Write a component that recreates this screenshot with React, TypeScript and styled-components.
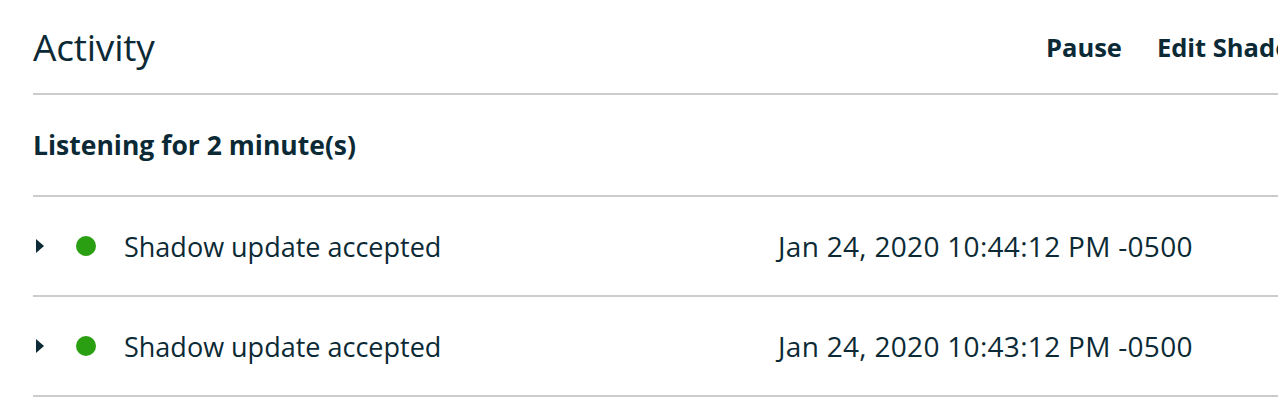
import styled, { createGlobalStyle } from "styled-components";

const GlobalStyle = createGlobalStyle`
  html, body {
    margin: 0;
    padding: 0;
    background: #ffffff;
    overflow: hidden;
  }
  body {
    font-family: "Open Sans", "Liberation Sans", sans-serif;
    color: #0b2a35;
  }
`;

const Panel = styled.section`
  margin-left: 33px;
  width: 1318px;
`;

const Header = styled.div`
  display: flex;
  align-items: center;
  justify-content: space-between;
  height: 93px;
  border-bottom: 2px solid #cccccc;
`;

const Title = styled.h2`
  margin: 0 0 1px;
  font-size: 37px;
  font-weight: 400;
  letter-spacing: -0.2px;
`;

const Actions = styled.div`
  display: flex;
  gap: 35px;
  width: 305px;
`;

const ActionButton = styled.button`
  border: none;
  background: none;
  padding: 0;
  font-family: inherit;
  font-size: 25.5px;
  font-weight: 700;
  color: #0b2a35;
  white-space: nowrap;
  cursor: pointer;
`;

const Status = styled.div`
  display: flex;
  align-items: center;
  height: 100px;
  border-bottom: 2px solid #cccccc;
  font-size: 26.5px;
  font-weight: 700;
`;

const Row = styled.div`
  display: grid;
  grid-template-columns: 40px 48px 654px auto;
  align-items: center;
  height: 98px;
  padding-left: 3px;
  border-bottom: 2px solid #cccccc;
  font-size: 27px;
`;

const Caret = styled.span`
  width: 0;
  height: 0;
  border-top: 7px solid transparent;
  border-bottom: 7px solid transparent;
  border-left: 8px solid #0b2a35;
`;

const Dot = styled.span<{ $color: string }>`
  width: 20px;
  height: 20px;
  border-radius: 50%;
  background: ${(p) => p.$color};
`;

const EventName = styled.span`
  white-space: nowrap;
`;

const Timestamp = styled.span`
  white-space: nowrap;
  font-size: 28px;
  letter-spacing: 0.3px;
`;

const events = [
  { name: "Shadow update accepted", time: "Jan 24, 2020 10:44:12 PM -0500" },
  { name: "Shadow update accepted", time: "Jan 24, 2020 10:43:12 PM -0500" },
];

export default function App() {
  return (
    <>
      <GlobalStyle />
      <Panel>
        <Header>
          <Title>Activity</Title>
          <Actions>
            <ActionButton>Pause</ActionButton>
            <ActionButton>Edit Shadow</ActionButton>
          </Actions>
        </Header>
        <Status>Listening for 2 minute(s)</Status>
        {events.map((e, i) => (
          <Row key={i}>
            <Caret />
            <Dot $color="#2a9f12" />
            <EventName>{e.name}</EventName>
            <Timestamp>{e.time}</Timestamp>
          </Row>
        ))}
      </Panel>
    </>
  );
}
